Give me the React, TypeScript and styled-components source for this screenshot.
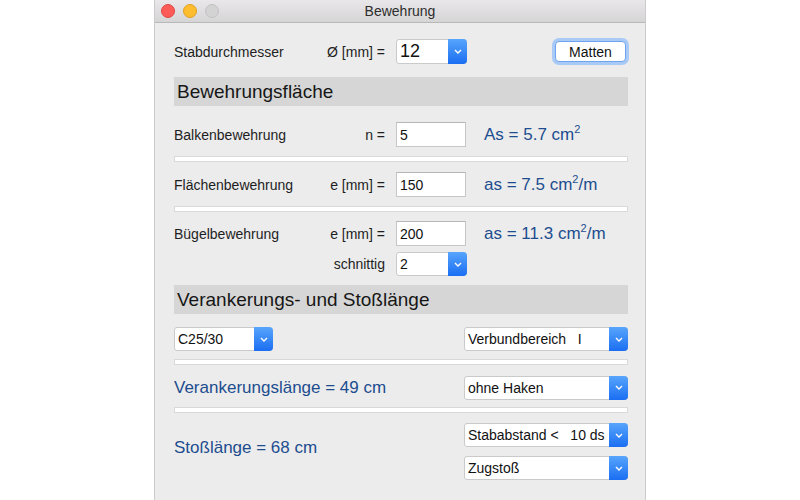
import React from "react";
import styled, { createGlobalStyle } from "styled-components";

const GlobalStyle = createGlobalStyle`
  body {
    margin: 0;
    background: #ffffff;
    font-family: "Liberation Sans", Arial, sans-serif;
  }
`;

const Window = styled.div`
  width: 492px;
  height: 500px;
  margin: 0 auto;
  box-sizing: border-box;
  background: #ececec;
  border-left: 1px solid #cbcbcb;
  border-right: 1px solid #cbcbcb;
  overflow: hidden;
`;

const TitleBar = styled.div`
  height: 22px;
  display: grid;
  grid-template-columns: 1fr auto 1fr;
  align-items: center;
  background: linear-gradient(#e9e7e9, #d6d5d6);
  border-bottom: 1px solid #b8b8b8;
`;

const Lights = styled.div`
  display: flex;
  gap: 8px;
  padding-left: 6px;
`;

const Light = styled.span<{ $color: string; $edge: string }>`
  width: 12px;
  height: 12px;
  border-radius: 50%;
  background: ${(p) => p.$color};
  border: 0.5px solid ${(p) => p.$edge};
`;

const Title = styled.div`
  font-size: 14px;
  color: #2d2d2d;
`;

const Content = styled.div`
  padding: 0 17px 0 19px;
  display: flex;
  flex-direction: column;
`;

const Row = styled.div<{ $top: number; $h: number }>`
  display: flex;
  align-items: center;
  margin-top: ${(p) => p.$top}px;
  height: ${(p) => p.$h}px;
`;

const Label = styled.div`
  width: 145px;
  font-size: 14px;
  color: #1e1e1e;
`;

const Sym = styled.div`
  width: 66px;
  text-align: right;
  font-size: 14px;
  color: #1e1e1e;
  margin-right: 11px;
`;

const Header = styled.div<{ $top: number }>`
  margin-top: ${(p) => p.$top}px;
  height: 29px;
  display: flex;
  align-items: center;
  padding-left: 3px;
  background: #d6d6d6;
  font-size: 19px;
  color: #161616;
`;

const Field = styled.input`
  width: 70px;
  height: 25px;
  box-sizing: border-box;
  border: 1px solid #c6c6c6;
  border-top-color: #b6b6b6;
  background: #fff;
  padding: 0 0 0 3px;
  font-family: inherit;
  font-size: 14px;
  color: #111;
  outline: none;
`;

const Result = styled.div`
  margin-left: 18px;
  font-size: 17px;
  color: #1d4d8f;
`;

const Sup = styled.sup`
  font-size: 11px;
  vertical-align: 7px;
  line-height: 0;
`;

const Separator = styled.div<{ $top: number }>`
  margin-top: ${(p) => p.$top}px;
  height: 6px;
  box-sizing: border-box;
  background: #ffffff;
  border: 1px solid #d9d9d9;
`;

const PopUpBox = styled.div<{ $w: number; $h: number }>`
  width: ${(p) => p.$w}px;
  height: ${(p) => p.$h}px;
  box-sizing: border-box;
  display: flex;
  background: #fff;
  border: 1px solid #cacaca;
  border-radius: 3px;
`;

const PopUpValue = styled.div<{ $big?: boolean }>`
  flex: 1;
  display: flex;
  align-items: center;
  padding-left: 3px;
  font-size: ${(p) => (p.$big ? 18 : 14)}px;
  color: #111;
  white-space: pre;
`;

const PopUpArrow = styled.div`
  width: 19px;
  margin: -1px -1px -1px 0;
  border-radius: 0 4px 4px 0;
  background: linear-gradient(#57a5fc, #1b6ef2);
  display: flex;
  align-items: center;
  justify-content: center;
`;

const Matten = styled.button`
  margin-left: auto;
  margin-right: 2px;
  width: 71px;
  height: 21px;
  box-sizing: border-box;
  border: 1px solid #6ea3ee;
  border-radius: 4px;
  background: #fff;
  box-shadow: 0 0 0 3px #a9caf6;
  font-family: inherit;
  font-size: 14px;
  color: #111;
  padding: 0;
`;

const Spread = styled(Row)`
  justify-content: space-between;
`;

const BlueLabel = styled.div<{ $shift?: number }>`
  font-size: 17px;
  color: #1d4d8f;
  padding-bottom: ${(p) => p.$shift ?? 0}px;
`;

const Stack = styled.div`
  display: flex;
  flex-direction: column;
  gap: 9px;
`;

const Chevron = () => (
  <svg width="8" height="5" viewBox="0 0 8 5">
    <path d="M1 1 L4 4 L7 1" fill="none" stroke="#fff" strokeWidth="1.4" />
  </svg>
);

const PopUp = ({
  value,
  w,
  h = 24,
  big,
}: {
  value: string;
  w: number;
  h?: number;
  big?: boolean;
}) => (
  <PopUpBox $w={w} $h={h}>
    <PopUpValue $big={big}>{value}</PopUpValue>
    <PopUpArrow>
      <Chevron />
    </PopUpArrow>
  </PopUpBox>
);

const App = () => {
  return (
    <>
      <GlobalStyle />
      <Window>
        <TitleBar>
          <Lights>
            <Light $color="#fc5b57" $edge="#e2463f" />
            <Light $color="#fdbd2f" $edge="#e0a022" />
            <Light $color="#d3d3d3" $edge="#c2c2c2" />
          </Lights>
          <Title>Bewehrung</Title>
          <div />
        </TitleBar>
        <Content>
          <Row $top={15} $h={27}>
            <Label>Stabdurchmesser</Label>
            <Sym>Ø [mm] =</Sym>
            <PopUp value="12" w={71} h={25} big />
            <Matten>Matten</Matten>
          </Row>

          <Header $top={12}>Bewehrungsfläche</Header>

          <Row $top={16} $h={25}>
            <Label>Balkenbewehrung</Label>
            <Sym>n =</Sym>
            <Field defaultValue="5" />
            <Result>
              As = 5.7 cm<Sup>2</Sup>
            </Result>
          </Row>
          <Separator $top={9} />

          <Row $top={10} $h={25}>
            <Label>Flächenbewehrung</Label>
            <Sym>e [mm] =</Sym>
            <Field defaultValue="150" />
            <Result>
              as = 7.5 cm<Sup>2</Sup>/m
            </Result>
          </Row>
          <Separator $top={9} />

          <Row $top={9} $h={25}>
            <Label>Bügelbewehrung</Label>
            <Sym>e [mm] =</Sym>
            <Field defaultValue="200" />
            <Result>
              as = 11.3 cm<Sup>2</Sup>/m
            </Result>
          </Row>
          <Row $top={6} $h={24}>
            <Label />
            <Sym>schnittig</Sym>
            <PopUp value="2" w={71} />
          </Row>

          <Header $top={9}>Verankerungs- und Stoßlänge</Header>

          <Spread $top={13} $h={24}>
            <PopUp value="C25/30" w={99} />
            <PopUp value={"Verbundbereich   I"} w={164} />
          </Spread>
          <Separator $top={8} />

          <Spread $top={10} $h={25}>
            <BlueLabel>Verankerungslänge = 49 cm</BlueLabel>
            <PopUp value="ohne Haken" w={164} />
          </Spread>
          <Separator $top={7} />

          <Spread $top={10} $h={57}>
            <BlueLabel $shift={8}>Stoßlänge = 68 cm</BlueLabel>
            <Stack>
              <PopUp value={"Stababstand <   10 ds"} w={164} />
              <PopUp value="Zugstoß" w={164} />
            </Stack>
          </Spread>
        </Content>
      </Window>
    </>
  );
};

export default App;
